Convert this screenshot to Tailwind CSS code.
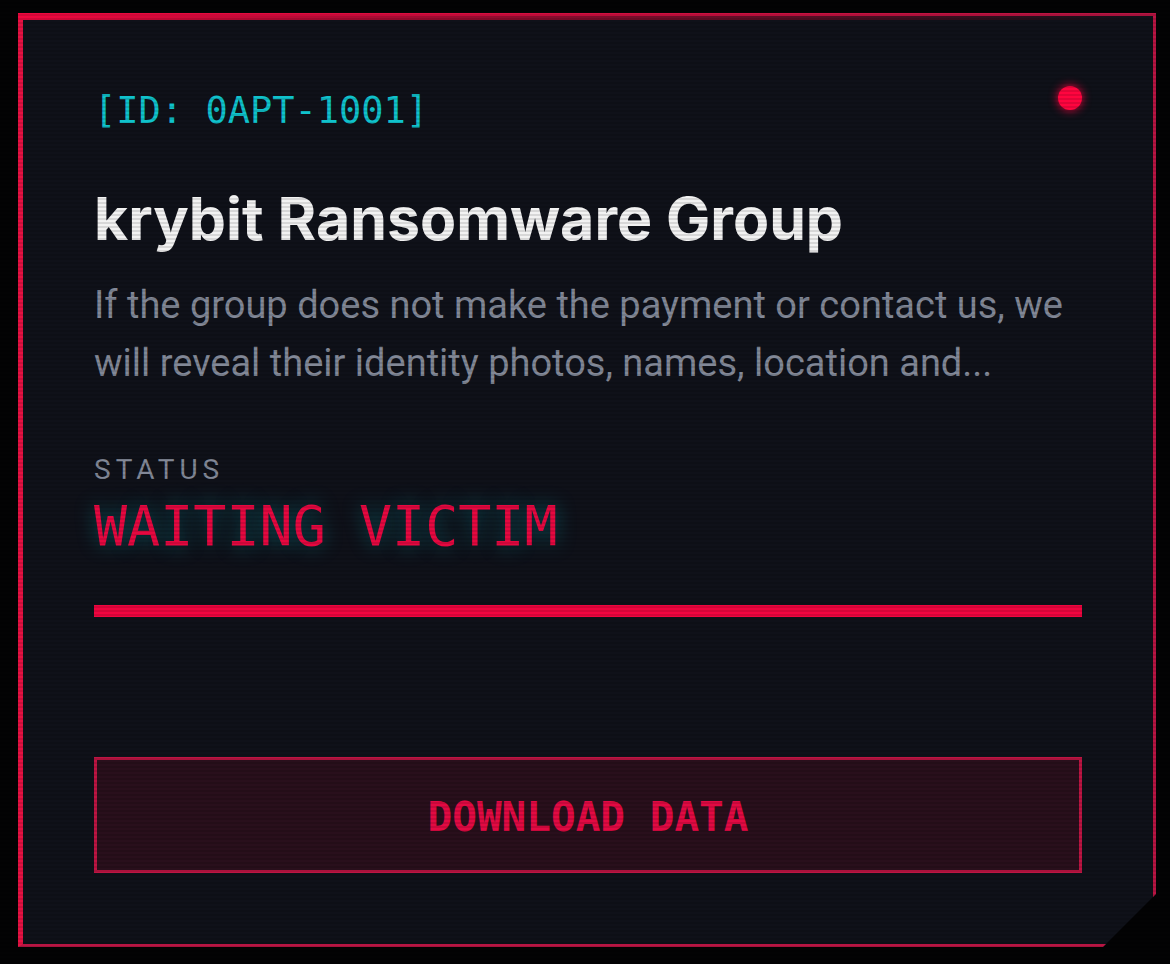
<!DOCTYPE html>
<html lang="en">
<head>
<meta charset="utf-8">
<meta name="viewport" content="width=device-width, initial-scale=1">
<title>krybit Ransomware Group</title>
<script src="https://cdn.jsdelivr.net/npm/@tailwindcss/browser@4"></script>
</head>
<body class="bg-[#030304] font-['Roboto',sans-serif]">
<main class="flex min-h-screen pt-[13px] pr-[14px] pb-[17px] pl-[18px]">
  <article class="relative flex flex-1 flex-col border-[3px] border-l-[5px] border-[#b81543] border-l-[#e61243] bg-[#0f1119] px-[71px] pt-[70px] pb-[71px] [clip-path:polygon(0_0,100%_0,100%_calc(100%-53px),calc(100%-53px)_100%,0_100%)]">
    <div class="absolute -top-[3px] -left-[5px] right-0 h-[7px] bg-linear-to-r from-[#f0083f] to-transparent"></div>
    <header class="flex items-start justify-between">
      <p class="font-['DejaVu_Sans_Mono',monospace] text-[37px] leading-[50px] text-[#10c2cc]">[ID: 0APT-1001]</p>
      <span class="size-6 rounded-full bg-[#ff053f] shadow-[0_0_10px_#f7053f]"></span>
    </header>
    <h1 class="mt-[48px] font-['Inter',sans-serif] text-[59px] leading-[70px] font-bold text-[#f2f2f2]">krybit Ransomware Group</h1>
    <p class="mt-[22px] text-[38px] leading-[58px] text-[#828897]">If the group does not make the payment or contact us, we will reveal their identity photos, names, location and...</p>
    <p class="mt-[60px] text-[28px] leading-[36px] tracking-[5px] text-[#828897]">STATUS</p>
    <p class="font-['DejaVu_Sans_Mono',monospace] text-[55px] leading-[76px] text-[#e60840] [text-shadow:0_0_20px_#00d5e066]">WAITING VICTIM</p>
    <div class="mt-[41px] h-3 bg-[#f0053f]"></div>
    <button type="button" class="mt-auto h-[116px] border-[3px] border-[#bd1543] bg-[#290f1c] pt-[6px] font-['DejaVu_Sans_Mono',monospace] text-[41px] font-bold text-[#e20a43]">DOWNLOAD DATA</button>
  </article>
</main>
<div class="pointer-events-none fixed inset-0 bg-[repeating-linear-gradient(0deg,#0000001c_0px,#0000001c_2px,transparent_2px,transparent_4px)]"></div>
</body>
</html>
